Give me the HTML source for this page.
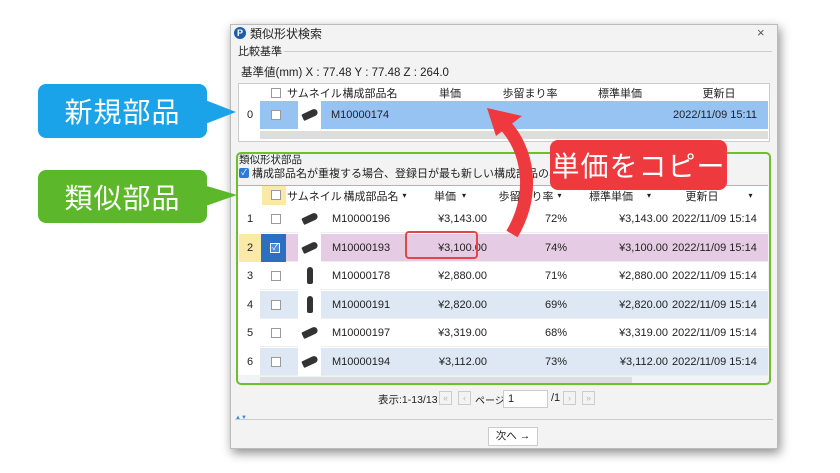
<!DOCTYPE html>
<html><head><meta charset="utf-8"><style>
*{box-sizing:border-box;margin:0;padding:0}
body{width:840px;height:473px;background:#fff;position:relative;overflow:hidden;font-family:"Liberation Sans","Noto Sans CJK JP",sans-serif;font-size:11px;color:#222}
.a{position:absolute}
.dlg{left:230px;top:24px;width:548px;height:425px;background:#f3f3f3;border:1px solid #bbb;box-shadow:2px 4px 10px rgba(0,0,0,.45)}
.cell{position:absolute;display:flex;align-items:center;white-space:nowrap}
.r{justify-content:flex-end;padding-right:3px}
.c{justify-content:center}
.cb{position:absolute;width:10px;height:10px;border:1px solid #999;background:#fff}
.callout{position:absolute;color:#fff;font-size:28px;display:flex;align-items:center;justify-content:center;border-radius:8px;font-family:"Noto Sans CJK JP",sans-serif;letter-spacing:1px}
.pb{position:absolute;top:391px;width:13px;height:14px;border:1px solid #ccc;color:#bbb;font-size:9px;text-align:center;line-height:12px}
</style></head><body>
<div class="a dlg"></div>
<!-- title -->
<div class="a" style="left:234px;top:27px;width:12px;height:12px;border-radius:50%;background:#1a5fa8;color:#fff;font-size:9px;font-weight:bold;text-align:center;line-height:12px">P</div>
<div class="a" style="left:250px;top:25px;font-size:12px">類似形状検索</div>
<div class="a" style="left:757px;top:25px;font-size:13px;color:#555">×</div>
<div class="a" style="left:238px;top:43px;font-size:11px">比較基準</div>
<div class="a" style="left:284px;top:51px;width:488px;height:1px;background:#ccc"></div>
<div class="a" style="left:241px;top:64px;font-size:11.5px">基準値(mm) X : 77.48 Y : 77.48 Z : 264.0</div>
<!-- top table -->
<div class="a" style="left:238px;top:83px;width:532px;height:59px;background:#fff;border:1px solid #ccc"></div>
<div class="cb" style="left:271px;top:88px"></div>
<div class="cell" style="left:287px;top:84px;height:17px">サムネイル</div>
<div class="cell c" style="left:330px;top:84px;width:80px;height:17px">構成部品名</div>
<div class="cell c" style="left:410px;top:84px;width:80px;height:17px">単価</div>
<div class="cell c" style="left:490px;top:84px;width:80px;height:17px">歩留まり率</div>
<div class="cell c" style="left:570px;top:84px;width:100px;height:17px">標準単価</div>
<div class="cell c" style="left:670px;top:84px;width:98px;height:17px">更新日</div>
<div class="a" style="left:260px;top:101px;width:508px;height:28px;background:#97c3f3"></div>
<div class="a" style="left:298px;top:101px;width:23px;height:28px;background:#fff"></div>
<div class="a" style="left:302px;top:111px;width:16px;height:7px;background:#333;border-radius:2px 6px 6px 2px;transform:rotate(-25deg)"></div>
<div class="cell" style="left:247px;top:101px;height:28px">0</div>
<div class="cb" style="left:271px;top:110px"></div>
<div class="cell" style="left:331px;top:101px;height:28px">M10000174</div>
<div class="cell" style="left:673px;top:101px;height:28px">2022/11/09 15:11</div>
<div class="a" style="left:260px;top:131px;width:508px;height:8px;background:#ddd"></div>
<!-- bottom section -->
<div class="a" style="left:236px;top:152px;width:535px;height:233px;border:2.5px solid #6cc02a;border-radius:5px"></div>
<div class="a" style="left:239px;top:152px;font-size:10.5px">類似形状部品</div>
<div class="a" style="left:239px;top:168px;width:10px;height:10px;background:#2d7bd8;border-radius:2px;color:#fff;font-size:8px;line-height:10px;text-align:center">✓</div>
<div class="a" style="left:252px;top:165px;font-size:11px">構成部品名が重複する場合、登録日が最も新しい構成部品のみ表示</div>
<div class="a" style="left:238px;top:185px;width:530px;height:190px;background:#fff;border-top:1px solid #9bb7d4"></div>
<div class="a" style="left:262px;top:186px;width:24px;height:19px;background:#fbe9a6"></div>
<div class="cb" style="left:271px;top:190px"></div>
<div class="cell" style="left:287px;top:186px;height:19px">サムネイル</div>
<div class="cell c" style="left:335px;top:186px;width:80px;height:19px">構成部品名 <span style="font-size:8px;margin-left:4px">▾</span></div>
<div class="cell c" style="left:420px;top:186px;width:60px;height:19px">単価 <span style="font-size:8px;margin-left:6px">▾</span></div>
<div class="cell c" style="left:490px;top:186px;width:80px;height:19px">歩留まり率 <span style="font-size:8px;margin-left:4px">▾</span></div>
<div class="cell c" style="left:570px;top:186px;width:100px;height:19px">標準単価 <span style="font-size:8px;margin-left:14px">▾</span></div>
<div class="cell c" style="left:670px;top:186px;width:98px;height:19px">更新日 <span style="font-size:8px;margin-left:30px">▾</span></div>
<div id="rows"></div>
<script>
var d=[["1","M10000196","¥3,143.00","72%","#fff"],["2","M10000193","¥3,100.00","74%","#e6cbe4"],["3","M10000178","¥2,880.00","71%","#fff"],["4","M10000191","¥2,820.00","69%","#dde8f4"],["5","M10000197","¥3,319.00","68%","#fff"],["6","M10000194","¥3,112.00","73%","#dde8f4"]];
var h="",y=205;
d.forEach(function(r,i){
 h+='<div class="a" style="left:260px;top:'+y+'px;width:508px;height:28px;background:'+r[4]+';border-bottom:1px solid #eee"></div>';
 h+='<div class="a" style="left:298px;top:'+y+'px;width:23px;height:28px;background:#fff"></div>';
 if(i==1){h+='<div class="a" style="left:239px;top:'+y+'px;width:22px;height:28px;background:#fbe9a6"></div><div class="a" style="left:261px;top:'+y+'px;width:25px;height:28px;background:#2a6fc0"></div><div class="a" style="left:270px;top:'+(y+9)+'px;width:10px;height:10px;background:#4a8ee0;border:1px solid #fff;color:#fff;font-size:8px;line-height:8px;text-align:center">✓</div>';}
 else h+='<div class="cb" style="left:271px;top:'+(y+9)+'px"></div>';
 h+='<div class="cell" style="left:247px;top:'+y+'px;height:28px">'+r[0]+'</div>';
 if(i==2||i==3) h+='<div class="a" style="left:307px;top:'+(y+5)+'px;width:6px;height:17px;background:#333;border-radius:3px 3px 2px 2px"></div>';
 else h+='<div class="a" style="left:302px;top:'+(y+10)+'px;width:16px;height:7px;background:#333;border-radius:2px 6px 6px 2px;transform:rotate(-25deg)"></div>';
 h+='<div class="cell" style="left:332px;top:'+y+'px;height:28px">'+r[1]+'</div>';
 h+='<div class="cell r" style="left:410px;top:'+y+'px;width:80px;height:28px">'+r[2]+'</div>';
 h+='<div class="cell r" style="left:490px;top:'+y+'px;width:80px;height:28px">'+r[3]+'</div>';
 h+='<div class="cell r" style="left:570px;top:'+y+'px;width:101px;height:28px">'+r[2]+'</div>';
 h+='<div class="cell" style="left:672px;top:'+y+'px;height:28px">2022/11/09 15:14</div>';
 y+=28.5;});
document.getElementById("rows").innerHTML=h;
</script>
<div class="a" style="left:260px;top:377px;width:372px;height:6px;background:#ddd"></div>
<div class="a" style="left:405px;top:231px;width:73px;height:28px;border:2px solid #e04848;border-radius:4px"></div>
<!-- pagination -->
<div class="a" style="left:378px;top:392px;font-size:10.5px">表示:1-13/13</div>
<div class="pb" style="left:439px">«</div>
<div class="pb" style="left:458px">‹</div>
<div class="a" style="left:475px;top:392px;font-size:10px">ページ:</div>
<div class="a" style="left:503px;top:390px;width:45px;height:18px;border:1px solid #ccc;background:#fff;padding:2px 4px;font-size:11px">1</div>
<div class="a" style="left:551px;top:392px;font-size:11px">/1</div>
<div class="pb" style="left:563px">›</div>
<div class="pb" style="left:582px">»</div>
<div class="a" style="left:235px;top:419px;width:538px;height:1px;background:#ccc"></div>
<div class="a" style="left:235px;top:415px;font-size:6px;color:#3a8ad8">▲▼</div>
<div class="a" style="left:488px;top:427px;width:50px;height:19px;border:1px solid #ccc;background:#fff;font-size:10.5px;text-align:center;line-height:17px">次へ →</div>
<!-- callouts -->
<svg class="a" style="left:0;top:0" width="840" height="473">
<polygon points="200,98 236,112 200,126" fill="#1aa3e8"/>
<polygon points="200,184 237,195 200,208" fill="#5cb82a"/>
<path d="M512,234 C535,195 530,150 502,122" stroke="#ee3a3e" stroke-width="13" fill="none"/>
<polygon points="487,108 522,116 496,136" fill="#ee3a3e"/>
</svg>
<div class="callout" style="left:38px;top:84px;width:169px;height:54px;background:#1aa3e8">新規部品</div>
<div class="callout" style="left:38px;top:170px;width:169px;height:53px;background:#5cb82a">類似部品</div>
<div class="callout" style="left:550px;top:140px;width:177px;height:50px;background:#ee3a3e">単価をコピー</div>
</body></html>
